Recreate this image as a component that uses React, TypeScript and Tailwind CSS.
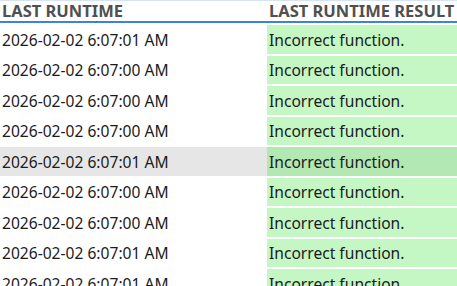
const rows = [
  "2026-02-02 6:07:01 AM",
  "2026-02-02 6:07:00 AM",
  "2026-02-02 6:07:00 AM",
  "2026-02-02 6:07:00 AM",
  "2026-02-02 6:07:01 AM",
  "2026-02-02 6:07:00 AM",
  "2026-02-02 6:07:00 AM",
  "2026-02-02 6:07:01 AM",
  "2026-02-02 6:07:01 AM",
];

export default function App() {
  return (
    <div
      className="w-[457px] h-[286px] overflow-hidden bg-white text-[15.6px] text-[#1b1b1b]"
      style={{ fontFamily: '"Noto Sans", "Open Sans", sans-serif' }}
    >
      {/* header */}
      <div className="flex h-[23px] border-t border-[#d6e4f5] border-b-2 border-b-[#3f83d6] font-bold text-[16.5px] text-[#505050] leading-none">
        <div className="w-[267px] pl-[2px] flex items-center whitespace-nowrap">LAST RUNTIME</div>
        <div className="flex-1 pl-[2px] flex items-center whitespace-nowrap">LAST RUNTIME RESULT</div>
      </div>

      {/* rows */}
      <div className="pt-px">
        {rows.map((r, i) => {
          const selected = i === 4;
          return (
            <div key={i} className="flex h-[30.5px] py-px whitespace-nowrap">
              <div
                className={`w-[267px] pl-[2px] pt-[2px] flex items-center ${selected ? "bg-[#e6e6e6]" : ""}`}
              >
                {r}
              </div>
              <div
                className={`flex-1 pl-[2px] pt-[2px] flex items-center ${selected ? "bg-[#b3e8b3]" : "bg-[#c4f7c4]"}`}
              >
                Incorrect function.
              </div>
            </div>
          );
        })}
      </div>
    </div>
  );
}
